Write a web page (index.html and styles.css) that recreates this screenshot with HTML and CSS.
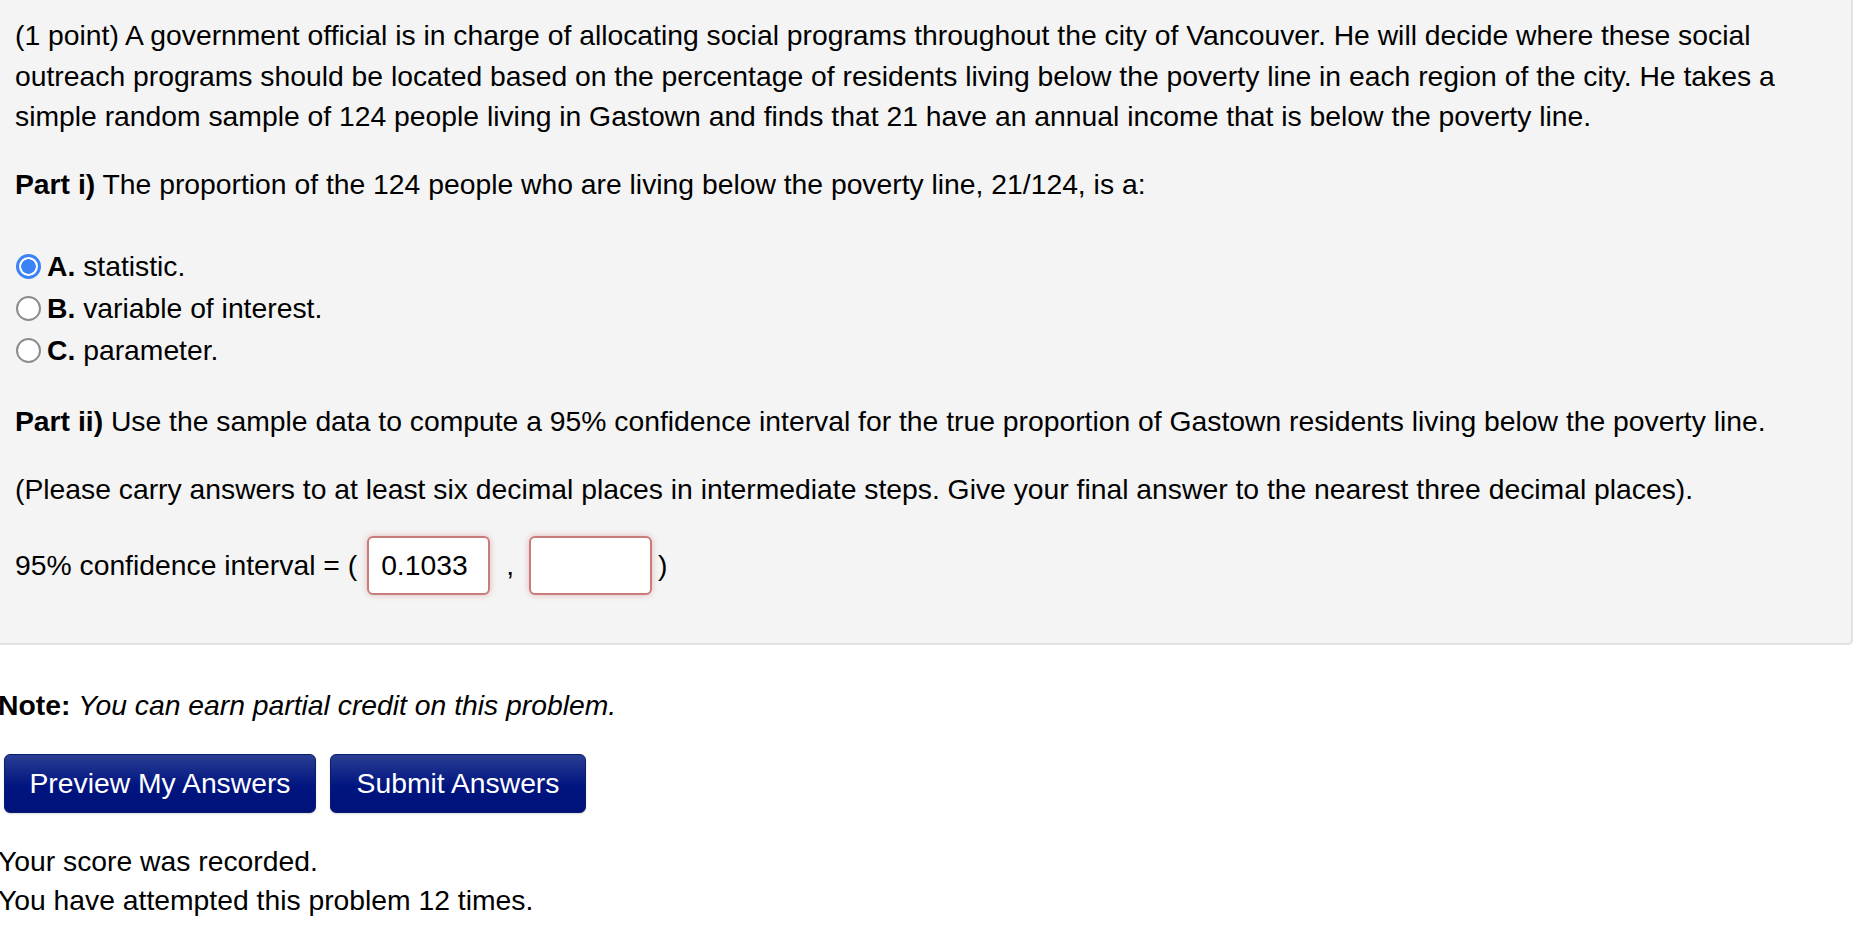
FILE: index.html
```html
<!DOCTYPE html>
<html lang="en">
<head>
<meta charset="utf-8">
<title>Problem</title>
<link rel="stylesheet" href="styles.css">
</head>
<body>
<div class="page">
  <div class="problem">
    <p class="para">(1 point) A government official is in charge of allocating social programs throughout the city of Vancouver. He will decide where these social outreach programs should be located based on the percentage of residents living below the poverty line in each region of the city. He takes a simple random sample of 124 people living in Gastown and finds that 21 have an annual income that is below the poverty line.</p>
    <p class="para part1"><b>Part i)</b> The proportion of the 124 people who are living below the poverty line, 21/124, is a:</p>
    <div class="options">
      <label class="opt"><input type="radio" name="q1" class="radio" checked><b>A.</b> statistic.</label>
      <label class="opt"><input type="radio" name="q1" class="radio"><b>B.</b> variable of interest.</label>
      <label class="opt"><input type="radio" name="q1" class="radio"><b>C.</b> parameter.</label>
    </div>
    <p class="para part2"><b>Part ii)</b> Use the sample data to compute a 95% confidence interval for the true proportion of Gastown residents living below the poverty line.</p>
    <p class="para please">(Please carry answers to at least six decimal places in intermediate steps. Give your final answer to the nearest three decimal places).</p>
    <div class="ci-row">
      <span class="ci-label">95% confidence interval = (</span>
      <input class="ans ans1" type="text" value="0.1033">
      <span class="comma">,</span>
      <input class="ans ans2" type="text" value="">
      <span class="paren">)</span>
    </div>
  </div>
  <div class="after">
    <p class="note"><b>Note:</b> <i>You can earn partial credit on this problem.</i></p>
    <div class="buttons">
      <button class="btn btn-preview" type="button">Preview My Answers</button>
      <button class="btn btn-submit" type="button">Submit Answers</button>
    </div>
    <div class="status">
      <div class="status-line">Your score was recorded.</div>
      <div class="status-line">You have attempted this problem 12 times.</div>
    </div>
  </div>
</div>
</body>
</html>
```
FILE: styles.css
```css
html, body {
  margin: 0;
  padding: 0;
  background: #ffffff;
}
body {
  font-family: "Liberation Sans", Arial, Helvetica, sans-serif;
  font-size: 28.3px;
  color: #000000;
  width: 1870px;
  height: 926px;
  overflow: hidden;
}
.page {
  display: flex;
  flex-direction: column;
}
.problem {
  width: 1836px;
  background: #f4f4f4;
  padding: 15px 0 48px 15px;
  border-right: 2px solid #e2e2e2;
  border-bottom: 2px solid #e2e2e2;
  border-bottom-right-radius: 5px;
  box-sizing: content-box;
}
.para {
  margin: 0;
  line-height: 40.5px;
  padding-right: 2px;
}
.part1 {
  margin-top: 27px;
}
.options {
  margin-top: 41px;
  display: flex;
  flex-direction: column;
}
.opt {
  line-height: 42px;
  display: block;
}
.radio {
  appearance: none;
  -webkit-appearance: none;
  width: 25px;
  height: 25px;
  margin: 0 6px 0 1px;
  border-radius: 50%;
  border: 2px solid #8c8c8c;
  background: #ffffff;
  vertical-align: middle;
  box-sizing: border-box;
  position: relative;
  top: -2px;
}
.radio:checked {
  border: 3px solid #3b82f6;
  background: radial-gradient(circle, #3b82f6 0 7px, #ffffff 7.5px);
}
.part2 {
  margin-top: 30px;
}
.please {
  margin-top: 27px;
}
.ci-row {
  margin-top: 27px;
  display: flex;
  align-items: center;
  height: 59px;
}
.ci-label {
  white-space: pre;
}
.ans {
  font-family: "Liberation Sans", Arial, Helvetica, sans-serif;
  font-size: 28.3px;
  color: #000;
  width: 123px;
  height: 59px;
  box-sizing: border-box;
  border: 2px solid #c97d7b;
  border-radius: 6px;
  background: #ffffff;
  box-shadow: 0 0 6px rgba(190, 80, 80, 0.35);
  padding: 0 0 0 12px;
  margin: 0;
  outline: none;
}
.ans1 {
  margin-left: 10px;
}
.comma {
  margin-left: 16px;
  margin-right: 15px;
}
.paren {
  margin-left: 6px;
}
.after {
  margin-left: -2px;
}
.note {
  margin: 40px 0 0 0;
  line-height: 40.5px;
}
.buttons {
  display: flex;
  gap: 14px;
  margin-top: 28px;
  padding-left: 6px;
}
.btn {
  font-family: "Liberation Sans", Arial, Helvetica, sans-serif;
  font-size: 28.3px;
  color: #ffffff;
  height: 59px;
  padding: 0;
  white-space: nowrap;
  text-align: center;
  border: 1px solid #0b1d6e;
  border-radius: 6px;
  background: linear-gradient(#2a3f93, #001480 55%, #00127a);
  box-shadow: 0 1px 2px rgba(0, 0, 0, 0.15);
  cursor: pointer;
}
.btn-preview {
  width: 312px;
}
.btn-submit {
  width: 256px;
}
.status {
  margin-top: 29px;
}
.status-line {
  line-height: 39.5px;
}
```
